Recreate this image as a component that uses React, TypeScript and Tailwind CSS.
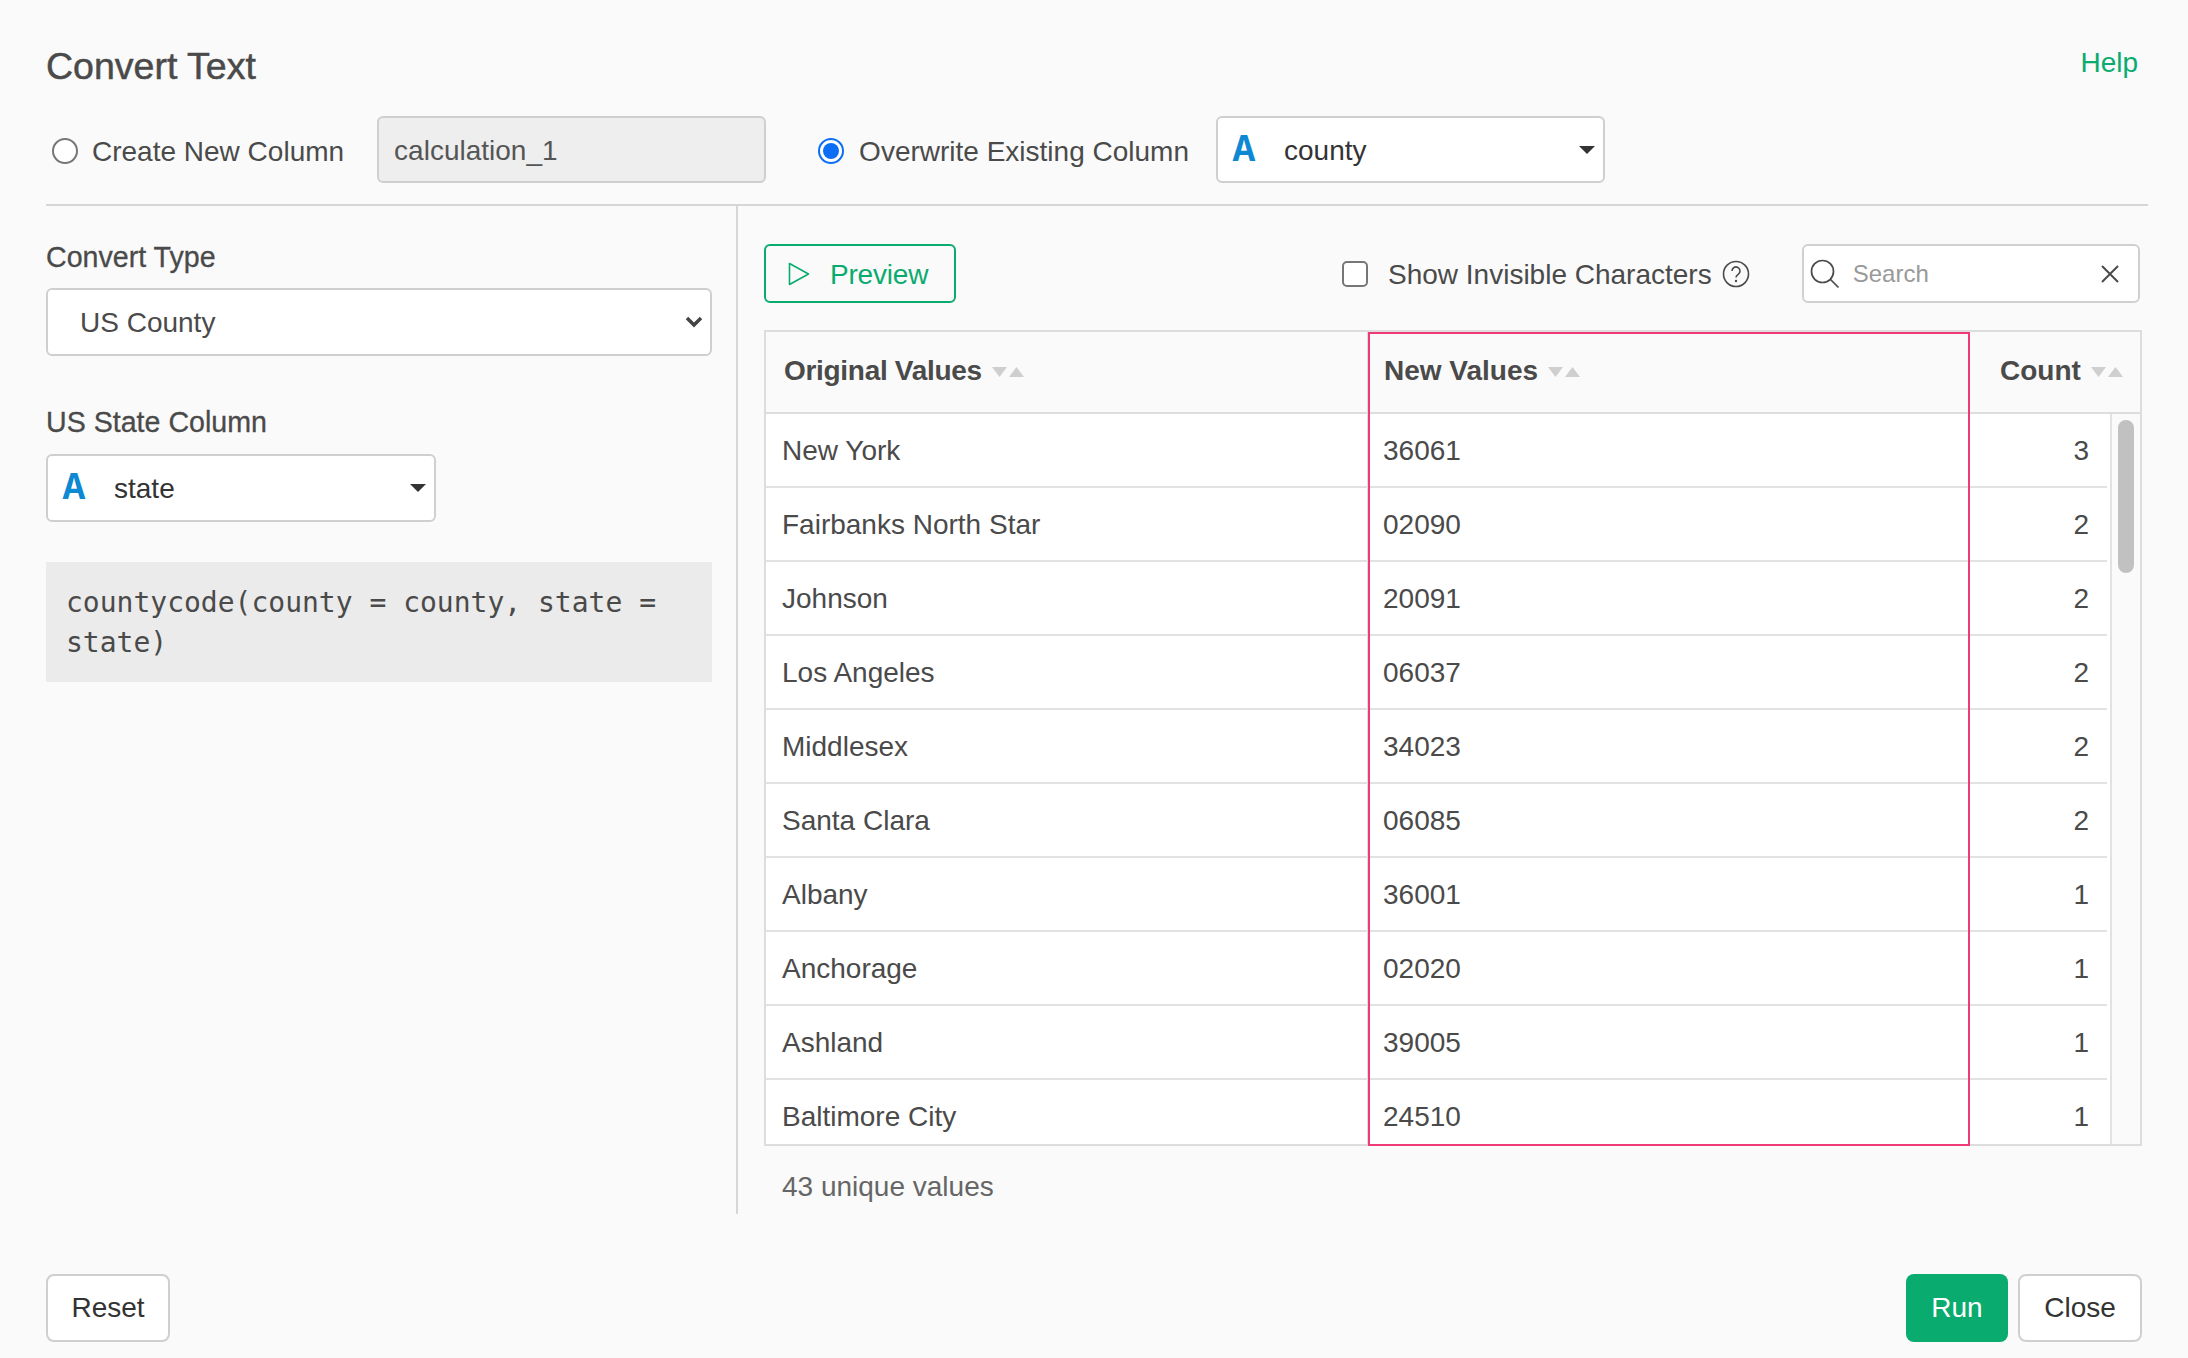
import React from "react";

const rows = [
  ["New York", "36061", "3"],
  ["Fairbanks North Star", "02090", "2"],
  ["Johnson", "20091", "2"],
  ["Los Angeles", "06037", "2"],
  ["Middlesex", "34023", "2"],
  ["Santa Clara", "06085", "2"],
  ["Albany", "36001", "1"],
  ["Anchorage", "02020", "1"],
  ["Ashland", "39005", "1"],
  ["Baltimore City", "24510", "1"],
];

const SortIcon = () => (
  <svg width="32" height="10" viewBox="0 0 32 10" className="ml-[10px] mt-[3px] shrink-0">
    <path d="M0 0h15l-7.5 10z" fill="#cfcfcf" />
    <path d="M17 10h15l-7.5-10z" fill="#cfcfcf" />
  </svg>
);

const Caret = () => (
  <svg width="16" height="8" viewBox="0 0 16 8" className="shrink-0">
    <path d="M0 0h16l-8 8z" fill="#333333" />
  </svg>
);

const TypeIcon = () => (
  <span className="w-[26px] mt-[2px] text-[38px] leading-none font-bold text-[#0d88d3] font-['Liberation_Mono',monospace] flex justify-center">
    A
  </span>
);

const ColumnSelect = ({ value, className }: { value: string; className: string }) => (
  <div className={`h-[67px] bg-white border-2 border-[#cfcfcf] rounded-[6px] flex items-center text-[#333333] ${className}`}>
    <TypeIcon />
    <span className="ml-[27px] flex-1 pt-[2px]">{value}</span>
    <Caret />
  </div>
);

const Radio = ({ checked }: { checked?: boolean }) =>
  checked ? (
    <span className="w-[26px] h-[26px] rounded-full border-2 border-[#0b6ef5] bg-white flex items-center justify-center shrink-0">
      <span className="w-[16px] h-[16px] rounded-full bg-[#0b6ef5]" />
    </span>
  ) : (
    <span className="block w-[26px] h-[26px] rounded-full border-2 border-[#767676] bg-white shrink-0" />
  );

const Btn = ({ label, className }: { label: string; className: string }) => (
  <button className={`h-[68px] rounded-[8px] flex items-center justify-center ${className}`}>{label}</button>
);

export default function App() {
  return (
    <div className="w-[2188px] h-[1358px] bg-[#fafafa] pl-[46px] pr-[40px] text-[28px] text-[#4a4a4a] font-['Liberation_Sans',Arial,sans-serif] overflow-hidden">
      {/* title */}
      <div className="h-[116px] flex justify-between">
        <h1 className="text-[37.5px] leading-[40px] mt-[46px] [-webkit-text-stroke:0.5px_#4a4a4a]">Convert Text</h1>
        <a className="text-[#0aab6e] leading-[36px] mt-[45px] mr-[10px]">Help</a>
      </div>

      {/* output column row */}
      <div className="h-[67px] flex items-center">
        <div className="ml-[6px] w-[26px] mt-[2px]">
          <Radio />
        </div>
        <span className="ml-[14px] mt-[4px]">Create New Column</span>
        <div className="ml-[33px] w-[389px] h-[67px] bg-[#eeeeee] border-2 border-[#cfcfcf] rounded-[6px] flex items-center pl-[15px] pt-[3px] text-[#555555]">
          calculation_1
        </div>
        <div className="ml-[52px] mt-[2px]">
          <Radio checked />
        </div>
        <span className="ml-[15px] mt-[4px]">Overwrite Existing Column</span>
        <ColumnSelect value="county" className="ml-[27px] w-[389px] pl-[13px] pr-[8px]" />
      </div>

      <div className="mt-[21px] h-[2px] bg-[#d6d6d6]" />

      <div className="flex h-[1008px]">
        {/* left panel */}
        <div className="w-[692px] pr-[24px] border-r-2 border-[#d6d6d6] pt-[33px]">
          <div className="text-[28.6px] leading-[36px] [-webkit-text-stroke:0.3px_#4a4a4a]">Convert Type</div>
          <div className="mt-[13px] h-[68px] bg-white border-2 border-[#cfcfcf] rounded-[6px] flex items-center justify-between pl-[32px] pr-[7px]">
            <span className="pt-[2px]">US County</span>
            <svg width="18" height="12" viewBox="0 0 18 12">
              <path d="M2 2l7 7 7-7" fill="none" stroke="#444444" strokeWidth="3.5" />
            </svg>
          </div>
          <div className="mt-[48px] text-[28.6px] leading-[36px] [-webkit-text-stroke:0.3px_#4a4a4a]">US State Column</div>
          <ColumnSelect value="state" className="mt-[14px] w-[390px] h-[68px] pl-[13px] pr-[8px]" />
          <div className="mt-[40px] h-[120px] bg-[#ebebeb] pl-[20px] pr-[21px] pt-[21px] text-[28px] leading-[40px] text-[#4a4a4a] font-['DejaVu_Sans_Mono',monospace]">
            countycode(county = county, state = state)
          </div>
        </div>

        {/* right panel */}
        <div className="flex-1 pl-[26px] pr-[6px] pt-[38px]">
          <div className="h-[59px] flex items-center">
            <button className="w-[192px] h-[59px] border-2 border-[#0aab6e] rounded-[6px] flex items-center pl-[22px] text-[#0aab6e]">
              <svg width="22" height="24" viewBox="0 0 22 24" className="shrink-0">
                <path d="M1.5 1.5v21l19-10.5z" fill="none" stroke="#0aab6e" strokeWidth="1.6" strokeLinejoin="round" />
              </svg>
              <span className="ml-[20px] pt-[2px] tracking-[-0.2px]">Preview</span>
            </button>
            <span className="ml-[386px] w-[26px] h-[26px] border-2 border-[#767676] rounded-[5px] bg-white shrink-0" />
            <span className="ml-[20px] pt-[2px]">Show Invisible Characters</span>
            <svg width="28" height="28" viewBox="0 0 28 28" className="ml-[10px] shrink-0">
              <circle cx="14" cy="14" r="12.5" fill="none" stroke="#4a4a4a" strokeWidth="1.6" />
              <path d="M10 11a4 4 0 1 1 6.2 3.3c-1.4.9-2.2 1.6-2.2 3.2" fill="none" stroke="#4a4a4a" strokeWidth="1.6" />
              <circle cx="14" cy="21" r="1.2" fill="#4a4a4a" />
            </svg>
            <div className="ml-[52px] w-[338px] h-[59px] bg-white border-2 border-[#d0d0d0] rounded-[6px] flex items-center pl-[6px] pr-[19px] shrink-0">
              <svg width="30" height="30" viewBox="0 0 30 30" className="shrink-0">
                <circle cx="12.5" cy="12.5" r="11" fill="none" stroke="#4a4a4a" strokeWidth="1.7" />
                <path d="M20.5 20.5l8 8" stroke="#4a4a4a" strokeWidth="1.7" />
              </svg>
              <span className="ml-[13px] flex-1 text-[24px] text-[#999999]">Search</span>
              <svg width="18" height="18" viewBox="0 0 18 18" className="shrink-0">
                <path d="M1 1l16 16M17 1L1 17" stroke="#4a4a4a" strokeWidth="2" />
              </svg>
            </div>
          </div>

          {/* table */}
          <div className="relative mt-[27px] h-[816px] border-2 border-[#dddddd]">
            <div className="h-[82px] flex font-bold border-b-2 border-[#dddddd] bg-[#fafafa]">
              <div className="w-[603px] border-r-2 border-[#dddddd] pl-[18px] pb-[3px] flex items-center">
                <span className="tracking-[-0.3px]">Original Values</span>
                <SortIcon />
              </div>
              <div className="w-[601px] pl-[15px] pb-[3px] flex items-center">
                New Values
                <SortIcon />
              </div>
              <div className="flex-1 pl-[30px] pb-[3px] flex items-center">
                Count
                <SortIcon />
              </div>
            </div>
            <div className="flex h-[730px]">
              <div className="w-[1344px] bg-white overflow-hidden pr-[3px]">
                {rows.map((r) => (
                  <div key={r[0]} className="h-[74px] flex items-center border-b-2 border-[#e2e2e2]">
                    <div className="w-[603px] h-full border-r-2 border-[#dddddd] pl-[16px] pt-[2px] flex items-center">{r[0]}</div>
                    <div className="w-[601px] pl-[14px] pt-[2px]">{r[1]}</div>
                    <div className="flex-1 text-right pr-[18px] pt-[2px]">{r[2]}</div>
                  </div>
                ))}
              </div>
              <div className="flex-1 border-l-2 border-[#e2e2e2] bg-[#fafafa] pt-[6px] pl-[6px]">
                <div className="w-[16px] h-[153px] rounded-full bg-[#c1c1c1]" />
              </div>
            </div>
            {/* highlighted column */}
            <div className="absolute left-[602px] top-0 w-[602px] h-[814px] border-2 border-[#f03a78] pointer-events-none" />
          </div>
          <div className="mt-[23px] ml-[18px] leading-[36px] text-[#666666]">43 unique values</div>
        </div>
      </div>

      {/* footer */}
      <div className="mt-[60px] flex items-center pr-[6px]">
        <Btn label="Reset" className="w-[124px] bg-white border-2 border-[#cfcfcf] text-[#333333]" />
        <div className="flex-1" />
        <Btn label="Run" className="w-[102px] bg-[#09ab6e] text-white" />
        <Btn label="Close" className="ml-[10px] w-[124px] bg-white border-2 border-[#cfcfcf] text-[#333333]" />
      </div>
    </div>
  );
}
